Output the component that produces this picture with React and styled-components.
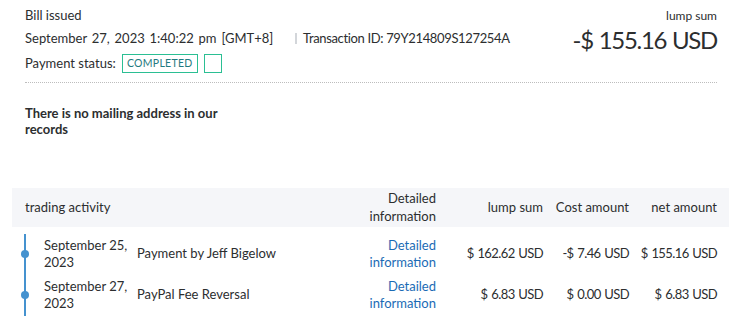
import React from 'react'
import styled, { createGlobalStyle } from 'styled-components'

const GlobalStyle = createGlobalStyle`
  body {
    margin: 0;
    background: #fff;
    font-family: Lato, "Noto Sans", sans-serif;
    font-size: 13px;
    color: #2c2e2f;
  }
`

const Page = styled.div`
  padding: 7px 20px 0 25px;
`

const Top = styled.div`
  display: flex;
  justify-content: space-between;
  align-items: flex-start;
`

const Info = styled.div`
  display: flex;
  flex-direction: column;
  gap: 6px;
`

const Line = styled.div`
  line-height: 17px;
  display: flex;
  align-items: center;
`

const DateText = styled.span`
  width: 270px;
  word-spacing: 1.5px;
`

const TxId = styled.span`
  border-left: 2px solid #d3d6da;
  padding-left: 6px;
  line-height: 11px;
  letter-spacing: -0.35px;
`

const StatusRow = styled.div`
  display: flex;
  align-items: center;
  gap: 6px;
  height: 19px;
  margin-top: 0.5px;
`

const Label = styled.span`
  margin-right: 0;
`

const Badge = styled.span`
  box-sizing: border-box;
  height: 19px;
  width: ${p => p.$w}px;
  border: 1.5px solid #2bbf93;
  color: #1f7a80;
  font-size: 10.5px;
  letter-spacing: 0.3px;
  display: flex;
  align-items: center;
  justify-content: center;
`

const Total = styled.div`
  text-align: right;
`

const TotalLabel = styled.div`
  font-size: 12px;
  line-height: 17px;
`

const TotalAmount = styled.div`
  font-size: 24px;
  line-height: 30px;
  margin-top: 1px;
  letter-spacing: -1.3px;
  word-spacing: 1px;
`

const Divider = styled.div`
  border-top: 1px dotted #bdbdbd;
  margin-top: 9px;
`

const Notice = styled.p`
  margin: 22px 0 0;
  width: 215px;
  font-weight: 700;
  line-height: 16px;
`

const cols = '112px 1fr 100px 107px 86px 88px'

const HeadRow = styled.div`
  display: grid;
  grid-template-columns: ${cols};
  align-items: center;
  margin: 51px -12px 0 -13px;
  padding: 0 12px 0 13px;
  height: 39px;
  background: #f5f6f9;
  line-height: 18px;
`

const Cell = styled.div`
  text-align: ${p => (p.$right ? 'right' : 'left')};
  grid-column: ${p => p.$span || 'auto'};
`

const Amount = styled.div`
  text-align: right;
  letter-spacing: -0.6px;
  word-spacing: 1px;
`

const Body = styled.div`
  margin-top: 7px;
`

const Row = styled.div`
  position: relative;
  display: grid;
  grid-template-columns: ${cols};
  align-items: center;
  padding: 3px 0 4px;
  line-height: 17px;

  &::before {
    content: '';
    position: absolute;
    left: -1px;
    top: 0;
    bottom: 0;
    width: 1.5px;
    background: #4592cf;
  }

  &::after {
    content: '';
    position: absolute;
    left: -4.5px;
    top: 50%;
    margin-top: -4px;
    width: 8px;
    height: 8px;
    border-radius: 50%;
    background: #4592cf;
  }
`

const DateCell = styled.div`
  padding-left: 19px;
`

const Link = styled.a`
  color: #1b6bb5;
  text-decoration: none;
  text-align: right;
`

const rows = [
  {
    date: ['September 25,', '2023'],
    desc: 'Payment by Jeff Bigelow',
    gross: '$ 162.62 USD',
    fee: '-$ 7.46 USD',
    net: '$ 155.16 USD'
  },
  {
    date: ['September 27,', '2023'],
    desc: 'PayPal Fee Reversal',
    gross: '$ 6.83 USD',
    fee: '$ 0.00 USD',
    net: '$ 6.83 USD'
  }
]

export default function App() {
  return (
    <Page>
      <GlobalStyle />
      <Top>
        <Info>
          <Line>Bill issued</Line>
          <Line>
            <DateText>September 27, 2023 1:40:22 pm [GMT+8]</DateText>
            <TxId>Transaction ID: 79Y214809S127254A</TxId>
          </Line>
          <StatusRow>
            <Label>Payment status:</Label>
            <Badge $w={76}>COMPLETED</Badge>
            <Badge $w={18} />
          </StatusRow>
        </Info>
        <Total>
          <TotalLabel>lump sum</TotalLabel>
          <TotalAmount>-$ 155.16 USD</TotalAmount>
        </Total>
      </Top>
      <Divider />
      <Notice>There is no mailing address in our records</Notice>

      <HeadRow>
        <Cell $span="span 2">trading activity</Cell>
        <Cell $right>Detailed<br />information</Cell>
        <Cell $right>lump sum</Cell>
        <Cell $right>Cost amount</Cell>
        <Cell $right>net amount</Cell>
      </HeadRow>
      <Body>
        {rows.map(r => (
          <Row key={r.desc}>
            <DateCell>{r.date[0]}<br />{r.date[1]}</DateCell>
            <Cell>{r.desc}</Cell>
            <Link href="#">Detailed<br />information</Link>
            <Amount>{r.gross}</Amount>
            <Amount>{r.fee}</Amount>
            <Amount>{r.net}</Amount>
          </Row>
        ))}
      </Body>
    </Page>
  )
}
